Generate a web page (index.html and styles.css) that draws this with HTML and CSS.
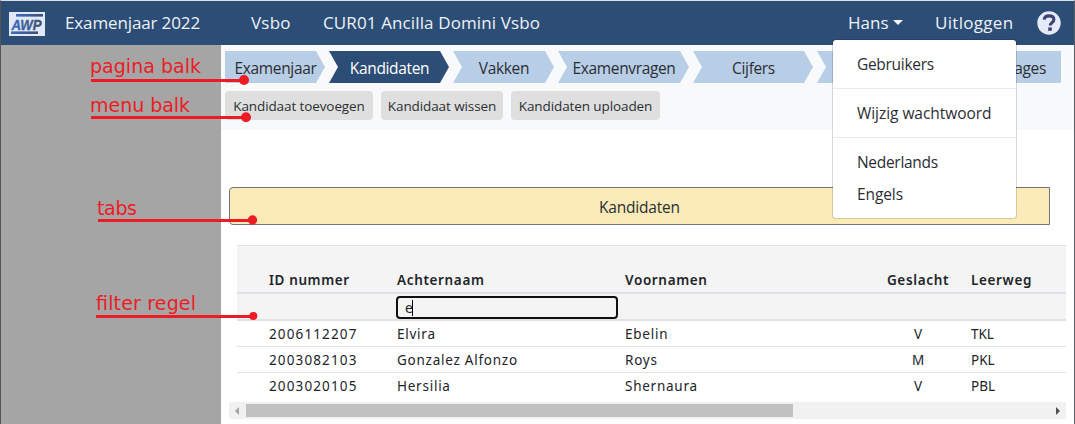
FILE: index.html
```html
<!DOCTYPE html>
<html lang="nl">
<head>
<meta charset="utf-8">
<title>AWP Kandidaten</title>
<link rel="stylesheet" href="styles.css">
</head>
<body>
<div class="window">
  <header class="navbar">
    <svg class="logo" viewBox="0 0 36 24">
      <defs><linearGradient id="awp" x1="0" y1="0" x2="1" y2="0"><stop offset="0" stop-color="#3c6cc0"/><stop offset="1" stop-color="#3f4e6e"/></linearGradient></defs>
      <rect width="36" height="24" fill="#e0e9f5"/>
      <rect x="7" y="2" width="27" height="2.6" fill="url(#awp)"/>
      <rect x="2" y="19.4" width="27" height="2.6" fill="url(#awp)"/>
      <text x="2.5" y="17.5" textLength="30" lengthAdjust="spacingAndGlyphs" class="logo-text" fill="url(#awp)" stroke="url(#awp)" stroke-width=".4">AWP</text>
    </svg>
    <span class="nav-item year">Examenjaar 2022</span>
    <span class="nav-item level">Vsbo</span>
    <span class="nav-item school">CUR01 Ancilla Domini Vsbo</span>
    <span class="nav-item user">Hans<i class="caret"></i></span>
    <span class="nav-item logout">Uitloggen</span>
    <svg class="help" viewBox="0 0 24 24">
      <circle cx="12" cy="12" r="11.7" fill="#e4ebf7"/>
      <path d="M7.2 8.6C7.6 5.5 9.7 4.9 12 4.9c2.9 0 4.9 1.4 4.9 3.7 0 3.3-3.7 3.1-3.7 5.9" fill="none" stroke="#3b4378" stroke-width="3.1"/>
      <rect x="11.2" y="16.4" width="3.6" height="3.4" fill="#3b4378"/>
    </svg>
  </header>
  <div class="body">
    <aside class="sidebar"></aside>
    <main class="main">
      <section class="bars">
        <nav class="steps">
          <span class="step first"><b>Examenjaar</b></span>
          <span class="step active"><b>Kandidaten</b></span>
          <span class="step narrow"><b>Vakken</b></span>
          <span class="step wide"><b>Examenvragen</b></span>
          <span class="step"><b>Cijfers</b></span>
          <span class="step"></span>
          <span class="step last"><b>ages</b></span>
        </nav>
        <div class="buttons">
          <span class="btn b1">Kandidaat toevoegen</span>
          <span class="btn b2">Kandidaat wissen</span>
          <span class="btn b3">Kandidaten uploaden</span>
        </div>
      </section>
      <div class="tab">Kandidaten</div>
      <div class="table">
        <div class="row head"><span></span><span class="h-id">ID nummer</span><span>Achternaam</span><span>Voornamen</span><span class="center">Geslacht</span><span>Leerweg</span></div>
        <div class="row filter"><span></span><span></span><div class="input">e<i class="cursor"></i></div></div>
        <div class="row"><span></span><span class="id">2006112207</span><span>Elvira</span><span>Ebelin</span><span class="center">V</span><span class="lw">TKL</span></div>
        <div class="row"><span></span><span class="id">2003082103</span><span>Gonzalez Alfonzo</span><span>Roys</span><span class="center">M</span><span class="lw">PKL</span></div>
        <div class="row"><span></span><span class="id">2003020105</span><span>Hersilia</span><span>Shernaura</span><span class="center">V</span><span class="lw">PBL</span></div>
      </div>
      <div class="scrollbar"><i class="arrow-left"></i><i class="thumb"></i><i class="arrow-right"></i></div>
    </main>
  </div>
</div>
<div class="dropdown">
  <span class="item m1">Gebruikers</span>
  <hr>
  <span class="item m2">Wijzig wachtwoord</span>
  <hr>
  <span class="item m3">Nederlands</span>
  <span class="item m4">Engels</span>
</div>
<svg class="notes" viewBox="0 0 1075 424">
  <g fill="#ed1c24">
    <text x="90" y="72.5" textLength="111">pagina balk</text>
    <rect x="91" y="79" width="153" height="3"/><circle cx="244" cy="80" r="5"/>
    <text x="90" y="112" textLength="100">menu balk</text>
    <rect x="91" y="116" width="155" height="3"/><circle cx="246" cy="117.2" r="5"/>
    <text x="97" y="215" textLength="40">tabs</text>
    <rect x="98" y="219" width="154" height="3"/><circle cx="252.5" cy="220" r="4.7"/>
    <text x="96" y="310" textLength="100">filter regel</text>
    <rect x="96" y="315" width="157" height="3"/><circle cx="253.3" cy="316" r="4"/>
  </g>
</svg>
</body>
</html>
```

FILE: styles.css
```css
* { box-sizing: border-box; }
body { margin: 0; width: 1075px; height: 424px; overflow: hidden; background: #fff; color: #2b2f33; font-family: "Open Sans", "Noto Sans", sans-serif; }
.window { height: 424px; border-left: 1px solid #555; border-right: 1px solid #5a5e64; border-top: 1px solid #d9dfe3; display: flex; flex-direction: column; }
.navbar { height: 44px; flex: none; background: #2c4d75; color: #eef2f8; display: flex; align-items: center; padding-left: 8px; }
.logo { width: 36px; height: 24px; flex: none; margin-top: 1px; overflow: visible; }
.logo-text { font: italic bold 15.5px "Liberation Sans", sans-serif; }
.nav-item { font-size: 17px; line-height: 44px; white-space: nowrap; flex: none; }
.year { margin-left: 20px; width: 186px; letter-spacing: -.13px; }
.level { width: 72px; letter-spacing: .2px; }
.school { width: 525px; letter-spacing: .12px; }
.user { width: 87px; display: flex; align-items: center; }
.caret { border: 5px solid transparent; border-top-color: #f4f6fa; border-bottom: 0; margin-left: 4px; margin-top: -2px; }
.logout { width: 102px; letter-spacing: .3px; }
.help { width: 24px; height: 24px; flex: none; }
.body { display: flex; flex: 1; }
.sidebar { width: 220px; background: #a5a5a5; flex: none; }
.main { flex: 1; min-width: 0; }
.bars { height: 85px; background: #f8f9fb; padding: 6px 0 0 4px; }
.steps { display: flex; gap: 4px; height: 32px; }
.step { width: 120px; flex: none; background: #b8cde6; font-size: 15.5px; letter-spacing: -.35px; line-height: 34px; padding-left: 1px; text-align: center; clip-path: polygon(0 0, calc(100% - 9px) 0, 100% 50%, calc(100% - 9px) 100%, 0 100%, 9px 50%); }
.step b { font-weight: 400; }
.first { width: 100px; clip-path: polygon(0 0, calc(100% - 9px) 0, 100% 50%, calc(100% - 9px) 100%, 0 100%); }
.active { background: #2c4d75; color: #fff; }
.active b { font-weight: 500; }
.narrow { width: 101px; }
.wide { width: 131px; }
.last { text-align: right; padding-right: 15px; clip-path: polygon(0 0, 100% 0, 100% 100%, 0 100%, 9px 50%); }
.buttons { display: flex; gap: 8px; margin-top: 8px; }
.btn { height: 29px; line-height: 31px; border-radius: 4px; background: #dfdfdf; font-size: 13.5px; letter-spacing: -.1px; text-align: center; white-space: nowrap; }
.b1 { width: 148px; }
.b2 { width: 122px; }
.b3 { width: 149px; }
.tab { width: 821px; height: 38px; margin: 57px 0 0 8px; background: #faebb8; border: 1px solid #6c757d; border-radius: 4px 0 0 4px; text-align: center; line-height: 38px; font-size: 15.5px; letter-spacing: -.2px; }
.table { width: 829px; margin: 20px 0 0 16px; border-top: 1px solid #dee2e6; color: #212529; font-family: "Noto Sans", sans-serif; font-size: 13.5px; letter-spacing: .65px; }
.row { display: grid; grid-template-columns: 32px 128px 228px 258px 70px 1fr; height: 26px; line-height: 27px; border-bottom: 1px solid #dee2e6; white-space: nowrap; }
.row:last-child { border: 0; }
.id { letter-spacing: 1.13px; }
.id + span, .id + span + span { letter-spacing: .75px; }
.row .center, .row .lw { letter-spacing: 0; }
.center { text-align: center; }
.row .center + span { padding-left: 18px; }
.head { height: 48px; padding-top: 22px; line-height: 25px; background: #f4f4f4; border-bottom: 2px solid #dee2e6; font-weight: 600; }
.row.head .center { margin: 0 -8px; letter-spacing: .65px; }
.head .h-id { letter-spacing: .6px; }
.filter { height: 27px; padding-top: 2px; background: #f4f4f4; border-bottom: 2px solid #dee2e6; }
.input { width: 222px; height: 23px; margin-left: -1px; border: 2px solid #101010; border-radius: 4px; padding-left: 7px; line-height: 18px; font-size: 14px; letter-spacing: 0; display: flex; align-items: center; }
.cursor { width: 1px; height: 16px; background: #000; margin-left: -1px; }
.scrollbar { width: 837px; height: 17px; margin: 3px 0 0 8px; background: #f1f1f1; display: flex; align-items: center; }
.arrow-left { border: 4px solid transparent; border-right-color: #a3a3a3; border-left: 0; margin: 0 7px 0 6px; }
.thumb { width: 547px; height: 13px; background: #c1c1c1; }
.arrow-right { border: 4px solid transparent; border-left-color: #505050; border-right: 0; margin-left: auto; margin-right: 6px; }
.dropdown { position: absolute; left: 832px; top: 39px; width: 185px; height: 180px; padding: 8px 0; background: #fff; background-clip: padding-box; border: 1px solid rgba(0, 0, 0, .15); border-radius: 4px; }
.dropdown hr { height: 1px; border: 0; margin: 8px 0; background: #e9ecef; }
.item { display: block; height: 32px; line-height: 33px; padding-left: 24px; font-size: 15.5px; letter-spacing: -.3px; white-space: nowrap; }
.m2 { letter-spacing: -.05px; }
.m4 { letter-spacing: -.1px; }
.notes { position: absolute; left: 0; top: 0; width: 1075px; height: 424px; font: 19px "DejaVu Sans", sans-serif; }
```
